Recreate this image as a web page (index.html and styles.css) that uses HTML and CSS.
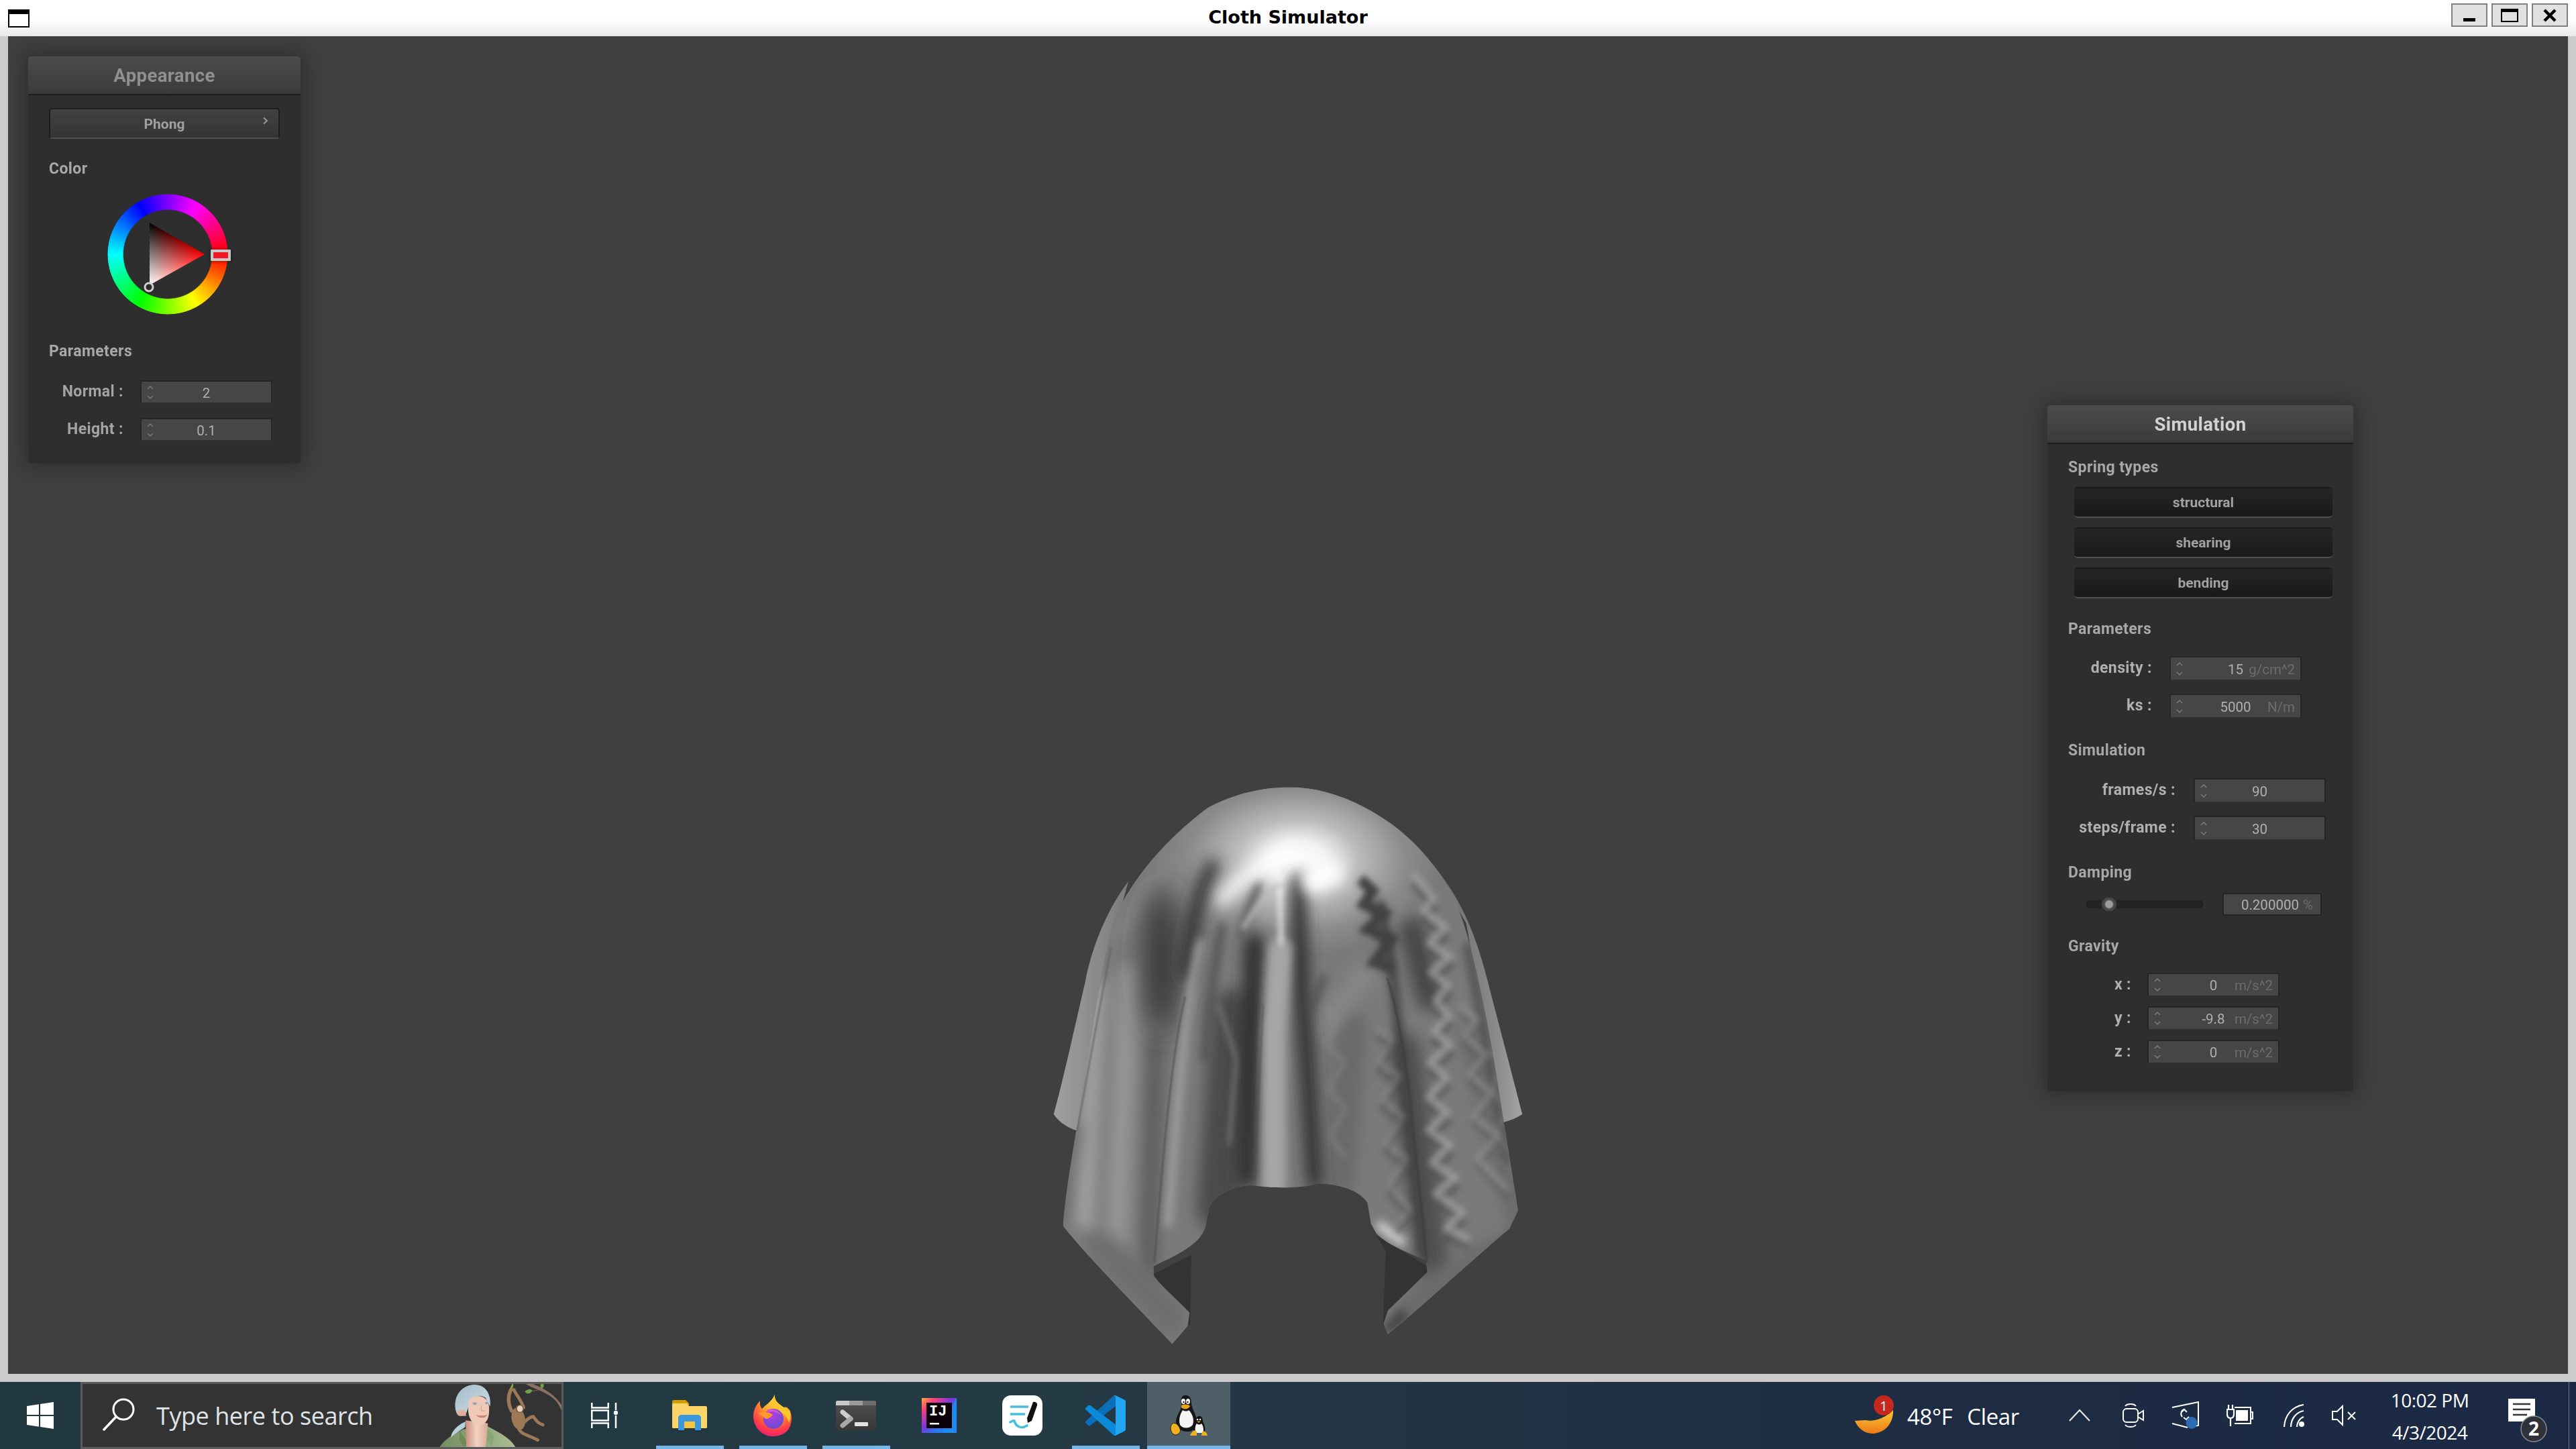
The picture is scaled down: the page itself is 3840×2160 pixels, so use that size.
FILE: index.html
```html
<!DOCTYPE html>
<html lang="en">
<head>
<meta charset="utf-8">
<title>Cloth Simulator</title>
<link rel="stylesheet" href="styles.css">
</head>
<body>
<div class="window">
  <header class="titlebar">
    <div class="win-icon"></div>
    <div class="win-title">Cloth Simulator</div>
    <div class="win-buttons">
      <button class="win-btn"><span class="glyph-min"></span></button>
      <button class="win-btn"><span class="glyph-max"></span></button>
      <button class="win-btn"><svg width="20" height="20" viewBox="0 0 20 20"><path d="M2 2 18 18M18 2 2 18" stroke="#000" stroke-width="4.5" fill="none"/></svg></button>
    </div>
  </header>
  <div class="frame">
    <main class="canvas">

      <svg class="cloth" viewBox="0 0 1568 1568" preserveAspectRatio="none">
        <defs>
          <clipPath id="front"><path d="M158 1215C165 1120 190 1000 215 850C240 700 270 520 300 420C340 330 430 220 560 130C640 90 720 76 790 76C880 76 980 110 1070 170C1150 225 1230 310 1265 410C1300 500 1340 680 1365 830C1385 950 1410 1090 1424 1175L1400 1222C1300 1300 1150 1430 1062 1496L1050 1470L1062 1435L1172 1335L1168 1305C1120 1285 1060 1265 1030 1235L1015 1210L1005 1155C985 1125 930 1105 865 1105C830 1118 740 1118 685 1110C640 1110 590 1125 565 1165L555 1215C540 1270 450 1300 410 1320L410 1345C430 1370 490 1420 510 1440L505 1475L462 1522C380 1440 240 1310 158 1215Z"/></clipPath>
          <filter id="b40" x="-80%" y="-80%" width="260%" height="260%"><feGaussianBlur stdDeviation="38"/></filter>
          <filter id="b20" x="-80%" y="-80%" width="260%" height="260%"><feGaussianBlur stdDeviation="20"/></filter>
          <filter id="b12" x="-80%" y="-80%" width="260%" height="260%"><feGaussianBlur stdDeviation="12"/></filter>
          <filter id="b8" x="-80%" y="-80%" width="260%" height="260%"><feGaussianBlur stdDeviation="8"/></filter>
          <filter id="b2" x="-80%" y="-80%" width="260%" height="260%"><feGaussianBlur stdDeviation="2"/></filter>
          <radialGradient id="dome" cx="810" cy="265" r="400" gradientUnits="userSpaceOnUse" gradientTransform="translate(810 265) scale(1 .62) translate(-810 -265)">
            <stop offset="0" stop-color="#fff"/><stop offset=".2" stop-color="#f2f2f2"/><stop offset=".42" stop-color="#bcbcbc"/><stop offset=".75" stop-color="#8c8c8c"/><stop offset="1" stop-color="#7a7a7a"/>
          </radialGradient>
          <linearGradient id="flapL" x1="0" y1="0" x2="1" y2="0"><stop offset="0" stop-color="#a0a0a0"/><stop offset="1" stop-color="#7a7a7a"/></linearGradient>
          <linearGradient id="flapR" x1="0" y1="0" x2="1" y2="0"><stop offset="0" stop-color="#6a6a6a"/><stop offset=".7" stop-color="#8a8a8a"/><stop offset="1" stop-color="#a4a4a4"/></linearGradient>
          <path id="zigA" d="M1130 300 1190 365 1160 395 1222 440 1178 480 1235 515 1182 555 1230 590 1195 630 1232 670 1190 710 1235 745 1180 790 1225 830 1175 880 1228 920 1175 965 1235 1005 1185 1050 1250 1090 1195 1130 1270 1180 1225 1220 1290 1250"/>
          <path id="zigB" d="M1260 640 1310 680 1275 720 1335 770 1290 820 1350 870 1300 930 1370 980 1310 1040 1395 1120"/>
          <path id="zigC" d="M1030 700 1075 730 1035 790 1095 825 1045 885 1105 930 1055 1000 1115 1040 1065 1110 1125 1170 1085 1210"/>
          <path id="zigD" d="M880 640 925 680 890 740 940 790 895 860 945 910 900 980 945 1040"/>
          <path id="zigE" d="M1345 760 1385 800 1350 860 1395 910 1365 970 1410 1040"/>
        </defs>
        <path d="M132 925C160 830 190 700 220 580C240 480 290 380 340 320L290 490L197 968C175 960 150 950 132 925Z" fill="url(#flapL)"/>
        <path d="M1436 925C1410 830 1370 690 1340 580C1310 470 1270 370 1190 280L1280 430L1380 947C1400 942 1420 935 1436 925Z" fill="url(#flapR)"/>
        <path d="M410 1340L515 1290L512 1475C480 1430 440 1380 410 1340Z" fill="#333"/>
        <path d="M1030 1240L1172 1320L1172 1345L1062 1435L1048 1480L1056 1280Z" fill="#333"/>
        <g clip-path="url(#front)">
          <rect width="1568" height="1568" fill="#7a7a7a"/>
          <rect x="100" y="30" width="1400" height="620" fill="url(#dome)"/>
          <g filter="url(#b20)" fill="none" stroke-linecap="round">
            <path d="M250 600 215 1240" stroke="#a0a0a0" stroke-width="55"/>
            <path d="M340 560 305 1280" stroke="#969696" stroke-width="60"/>
            <path d="M165 1200 205 960" stroke="#5c5c5c" stroke-width="22"/>
            <path d="M280 720 250 1240" stroke="#747474" stroke-width="18"/>
            <path d="M415 740 395 1340" stroke="#5c5c5c" stroke-width="46"/>
            <path d="M630 660 590 1170" stroke="#4c4c4c" stroke-width="120"/>
            <path d="M960 700 925 1100" stroke="#6a6a6a" stroke-width="90"/>
            <path d="M1110 760 1190 1320" stroke="#515151" stroke-width="90"/>
            <path d="M1290 720 1420 1180" stroke="#6b6b6b" stroke-width="60"/>
            <path d="M1130 450 1175 620" stroke="#474747" stroke-width="70"/>
            <path d="M1000 560 880 700" stroke="#868686" stroke-width="60"/>
            <path d="M320 460C360 380 400 320 440 280" stroke="#8a8a8a" stroke-width="30"/>
          </g>
          <ellipse cx="432" cy="530" rx="52" ry="190" fill="#383838" filter="url(#b40)"/>
          <g filter="url(#b20)" fill="none" stroke-linecap="round">
            <path d="M690 480 668 1090" stroke="#2e2e2e" stroke-width="56"/>
            <path d="M812 320 822 600 838 800 858 1100" stroke="#2e2e2e" stroke-width="44"/>
            <path d="M575 280C535 340 515 430 500 560" stroke="#2e2e2e" stroke-width="36"/>
          </g>
          <g filter="url(#b12)" fill="none" stroke-linecap="round">
            <path d="M600 440C575 550 565 650 555 780" stroke="#555" stroke-width="24"/>
            <path d="M700 330C680 380 665 420 655 460" stroke="#5a5a5a" stroke-width="24"/>
            <path d="M1040 380 1075 560" stroke="#3e3e3e" stroke-width="26"/>
            <path d="M1075 560 1160 1290" stroke="#404040" stroke-width="24"/>
            <path d="M1285 490 1325 690 1395 1040" stroke="#505050" stroke-width="24"/>
            <path d="M885 570 845 650" stroke="#505050" stroke-width="18"/>
            <path d="M762 500 745 720 745 1110" stroke="#a6a6a6" stroke-width="66"/>
            <path d="M540 480C500 620 480 860 450 1210" stroke="#a4a4a4" stroke-width="20"/>
            <path d="M1100 1255 1040 1215" stroke="#d4d4d4" stroke-width="24"/>
          </g>
          <g filter="url(#b20)" fill="none" stroke-linecap="round">
            <path d="M600 370C640 320 700 280 780 250" stroke="#fff" stroke-width="34"/>
            <path d="M910 300 850 320" stroke="#fff" stroke-width="60"/>
          </g>
          <g filter="url(#b8)" fill="none" stroke-linecap="round">
            <path d="M760 310 765 480" stroke="#fff" stroke-width="9"/>
            <path d="M660 440C700 380 720 360 760 330" stroke="#bcbcbc" stroke-width="12"/>
            <path d="M590 640 640 780 620 1000" stroke="#747474" stroke-width="10"/>
          </g>
          <g filter="url(#b8)" fill="none" stroke-linejoin="miter">
            <path d="M985 315 1020 345 995 380 1050 405 1005 445 1072 470 1025 530 1075 545" stroke="#424242" stroke-width="30"/>
            <use href="#zigA" y="24" stroke="#505050" stroke-width="20" opacity=".6"/>
            <use href="#zigA" stroke="#a8a8a8" stroke-width="16" opacity=".7"/>
            <use href="#zigB" y="20" stroke="#555" stroke-width="14" opacity=".45"/>
            <use href="#zigB" stroke="#9a9a9a" stroke-width="12" opacity=".55"/>
            <use href="#zigC" y="22" stroke="#3c3c3c" stroke-width="14" opacity=".4"/>
            <use href="#zigC" stroke="#989898" stroke-width="10" opacity=".45"/>
            <use href="#zigD" stroke="#8c8c8c" stroke-width="14" opacity=".4"/>
            <use href="#zigE" stroke="#959595" stroke-width="10" opacity=".45"/>
          </g>
          <path d="M1062 1440 1170 1340 1400 1222 1424 1175 1450 1250 1100 1530Z" fill="#6a6a6a" filter="url(#b20)"/>
          <path d="M155 1215 462 1522 510 1440 420 1350 300 1240Z" fill="#6e6e6e" filter="url(#b20)"/>
          <path d="M1056 1490 1110 1440" stroke="#444" stroke-width="30" fill="none" filter="url(#b12)"/>
          <g filter="url(#b2)" fill="none">
            <path d="M1060 570C1085 640 1112 780 1125 900C1140 1040 1160 1200 1170 1310" stroke="#3e3e3e" stroke-width="4"/>
            <path d="M292 490C262 640 225 820 197 968" stroke="#5e5e5e" stroke-width="3"/>
            <path d="M498 620C460 760 435 1050 412 1310" stroke="#4c4c4c" stroke-width="3"/>
            <path d="M715 640 690 1110M840 660 865 1105" stroke="#4e4e4e" stroke-width="2"/>
          </g>
        </g>
      </svg>

      <section class="panel panel-appearance">
        <h2 class="panel-head dim">Appearance</h2>
        <div class="btn-combo"><span>Phong</span><svg class="combo-arrow" width="10" height="12" viewBox="0 0 10 12"><path d="M2 1.500 7 6 2 10.500" fill="none" stroke="#9a9a9a" stroke-width="2"/></svg></div>
        <div class="group-label label-color">Color</div>
        <div class="wheel-box">
          <div class="wheel"></div>
          <svg class="wheel-over" width="180" height="180" viewBox="0 0 180 180">
            <defs>
              <linearGradient id="triR" gradientUnits="userSpaceOnUse" x1="63" y1="90" x2="145" y2="90"><stop offset="0" stop-color="#000"/><stop offset="1" stop-color="#f00"/></linearGradient>
              <linearGradient id="triW" gradientUnits="userSpaceOnUse" x1="103" y1="66" x2="63" y2="136"><stop offset="0" stop-color="#000"/><stop offset="1" stop-color="#fff"/></linearGradient>
            </defs>
            <polygon points="63,43 145,90 63,136" fill="url(#triR)"/>
            <polygon class="plus" points="63,43 145,90 63,136" fill="url(#triW)"/>
            <circle cx="62" cy="139" r="6" fill="#2b2b2b" stroke="#cfcfcf" stroke-width="3"/>
          </svg>
          <div class="hue-handle"></div>
        </div>
        <div class="group-label label-params">Parameters</div>
        <div class="row row-normal">
          <label class="row-label dim2">Normal :</label>
          <div class="num"><svg class="spin" width="14" height="24" viewBox="0 0 14 24"><path d="M3 7 7 3 11 7M3 17 7 21 11 17" fill="none" stroke="#7c7c7c" stroke-width="1.500"/></svg><span class="val">2</span></div>
        </div>
        <div class="row row-normal row-next">
          <label class="row-label dim2">Height :</label>
          <div class="num"><svg class="spin" width="14" height="24" viewBox="0 0 14 24"><path d="M3 7 7 3 11 7M3 17 7 21 11 17" fill="none" stroke="#7c7c7c" stroke-width="1.500"/></svg><span class="val">0.1</span></div>
        </div>
      </section>

      <section class="panel panel-sim">
        <h2 class="panel-head">Simulation</h2>
        <div class="group-label first">Spring types</div>
        <div class="springs">
          <div class="btn-on">structural</div>
          <div class="btn-on">shearing</div>
          <div class="btn-on">bending</div>
        </div>
        <div class="group-label g-param">Parameters</div>
        <div class="row row-density tall m26">
          <label class="row-label">density :</label>
          <div class="num"><svg class="spin" width="14" height="24" viewBox="0 0 14 24"><path d="M3 7 7 3 11 7M3 17 7 21 11 17" fill="none" stroke="#7c7c7c" stroke-width="1.500"/></svg><span class="val">15</span><span class="unit">g/cm^2</span></div>
        </div>
        <div class="row row-density tall m19">
          <label class="row-label">ks :</label>
          <div class="num"><svg class="spin" width="14" height="24" viewBox="0 0 14 24"><path d="M3 7 7 3 11 7M3 17 7 21 11 17" fill="none" stroke="#7c7c7c" stroke-width="1.500"/></svg><span class="val">5000</span><span class="unit">N/m</span></div>
        </div>
        <div class="group-label g-sim">Simulation</div>
        <div class="row row-frames tall m27">
          <label class="row-label">frames/s :</label>
          <div class="num"><svg class="spin" width="14" height="24" viewBox="0 0 14 24"><path d="M3 7 7 3 11 7M3 17 7 21 11 17" fill="none" stroke="#7c7c7c" stroke-width="1.500"/></svg><span class="val">90</span></div>
        </div>
        <div class="row row-frames tall m19">
          <label class="row-label">steps/frame :</label>
          <div class="num"><svg class="spin" width="14" height="24" viewBox="0 0 14 24"><path d="M3 7 7 3 11 7M3 17 7 21 11 17" fill="none" stroke="#7c7c7c" stroke-width="1.500"/></svg><span class="val">30</span></div>
        </div>
        <div class="group-label g-damp">Damping</div>
        <div class="slider-row">
          <div class="track"><div class="thumb"></div></div>
          <div class="float-box"><span class="val">0.200000</span><span class="unit">%</span></div>
        </div>
        <div class="group-label g-grav">Gravity</div>
        <div class="row row-grav grav m25">
          <label class="row-label">x :</label>
          <div class="num"><svg class="spin" width="14" height="24" viewBox="0 0 14 24"><path d="M3 7 7 3 11 7M3 17 7 21 11 17" fill="none" stroke="#7c7c7c" stroke-width="1.500"/></svg><span class="val">0</span><span class="unit">m/s^2</span></div>
        </div>
        <div class="row row-grav grav m14">
          <label class="row-label">y :</label>
          <div class="num"><svg class="spin" width="14" height="24" viewBox="0 0 14 24"><path d="M3 7 7 3 11 7M3 17 7 21 11 17" fill="none" stroke="#7c7c7c" stroke-width="1.500"/></svg><span class="val">-9.8</span><span class="unit">m/s^2</span></div>
        </div>
        <div class="row row-grav grav m14">
          <label class="row-label">z :</label>
          <div class="num"><svg class="spin" width="14" height="24" viewBox="0 0 14 24"><path d="M3 7 7 3 11 7M3 17 7 21 11 17" fill="none" stroke="#7c7c7c" stroke-width="1.500"/></svg><span class="val">0</span><span class="unit">m/s^2</span></div>
        </div>
      </section>
    </main>
  </div>
</div>

<footer class="taskbar">
  <div class="start">
    <svg width="40" height="40" viewBox="0 0 40 40"><path fill="#fff" d="M0 6 18 3.300V19H0ZM20 3 40 0V19H20ZM0 21H18V36.700L0 34ZM20 21H40V40L20 37Z"/></svg>
  </div>
  <div class="search">
    <svg class="search-icon" width="50" height="50" viewBox="0 0 50 50"><circle cx="31" cy="17" r="15" fill="none" stroke="#fff" stroke-width="3"/><path d="M20 28 2 47" stroke="#fff" stroke-width="3.500" stroke-linecap="round" fill="none"/></svg>
    <span class="search-text">Type here to search</span>
    <svg class="search-art" width="210" height="94" viewBox="-9 69 630 282">
      <defs>
        <linearGradient id="shirt" x1="0" y1="0" x2="1" y2="0"><stop offset="0" stop-color="#748c62"/><stop offset="1" stop-color="#abbf92"/></linearGradient>
        <linearGradient id="skin" x1="0" y1="0" x2="1" y2="0"><stop offset="0" stop-color="#c98f7c"/><stop offset=".5" stop-color="#f3d3c3"/><stop offset="1" stop-color="#d9a995"/></linearGradient>
        <linearGradient id="hair" x1="0" y1="0" x2="1" y2="1"><stop offset="0" stop-color="#a4bcc8"/><stop offset="1" stop-color="#cfdfe8"/></linearGradient>
      </defs>
      <path d="M450 60C480 90 560 100 600 150C615 170 625 195 630 215L630 180C600 120 550 90 470 60Z" fill="#8a6f63"/>
      <path d="M478 103C500 100 515 98 528 90" stroke="#8a6f63" stroke-width="3" fill="none"/>
      <path d="M457 103C470 92 482 90 490 98C484 112 468 120 457 103Z" fill="#6da143"/>
      <path d="M534 62C545 72 545 82 534 90C524 82 524 72 534 62Z" fill="#6da143"/>
      <path d="M405 60C408 72 404 90 396 100L390 90C396 78 400 68 405 60Z" fill="#7aa749"/>
      <path d="M72 360C90 320 130 300 180 272L290 258C340 285 395 310 420 360Z" fill="url(#shirt)"/>
      <path d="M165 275 205 340 180 350 165 320Z" fill="#6d8a57"/>
      <path d="M285 262 320 300 310 345 280 320Z" fill="#8ba577"/>
      <path d="M126 308C130 275 165 248 192 238L190 262C165 280 140 295 130 306Z" fill="#b9cfda"/>
      <path d="M192 232 196 360H282L292 245Z" fill="url(#skin)"/>
      <path d="M150 195C132 130 170 76 228 72C282 70 308 115 302 170L280 130C250 112 218 128 212 150L195 200C175 220 155 210 150 195Z" fill="url(#hair)"/>
      <path d="M208 140C240 108 292 122 297 170C300 220 288 250 250 256C220 250 192 210 208 140Z" fill="#efc9b8"/>
      <path d="M162 185C150 190 150 208 165 212L195 212 190 185Z" fill="#dfae9c"/>
      <path d="M220 156C228 150 240 152 246 158M278 156C284 150 292 150 296 154" stroke="#c49a8a" stroke-width="3" fill="none"/>
      <ellipse cx="233" cy="158" rx="8" ry="4" fill="#6ea3cf"/><ellipse cx="286" cy="155" rx="6" ry="4" fill="#6ea3cf"/>
      <path d="M262 165 262 188 280 190" stroke="#d8a796" stroke-width="4" fill="none"/>
      <path d="M238 208C255 212 275 212 288 207C282 224 254 226 238 208Z" fill="#d07f6f"/>
      <g fill="none" stroke="#9c7a57" stroke-linecap="round">
        <path d="M395 95C382 120 378 150 398 190" stroke-width="16"/>
        <path d="M408 95C420 120 440 140 452 175" stroke-width="14"/>
        <path d="M440 255C465 230 480 215 495 215C510 235 515 245 538 252" stroke-width="14"/>
        <path d="M430 270C440 295 480 300 515 320" stroke-width="14"/>
      </g>
      <ellipse cx="428" cy="225" rx="30" ry="50" fill="#9c7a57" transform="rotate(-12 428 225)"/>
      <circle cx="434" cy="180" r="18" fill="#7a5f45"/>
      <ellipse cx="435" cy="180" rx="13" ry="14" fill="#e7d4c2"/>
    </svg>
  </div>
  <div class="taskview">
    <svg width="40" height="40" viewBox="0 0 40 40"><path d="M1.250 1V8.500H25.750V1M1.250 39V31.500H25.750V39M1.250 12.500H25.750V27.500H1.250Z" fill="none" stroke="#fff" stroke-width="2.500"/><path d="M37 1V12M37 20V39" stroke="#fff" stroke-width="2.500"/><circle cx="37" cy="16" r="3.200" fill="#fff"/></svg>
  </div>
  <nav class="apps">
    <div class="app on">
      <svg width="52" height="46" viewBox="0 0 52 46"><path d="M0 3C0 1 1 0 3 0H20L25 5V8H0Z" fill="#d99a00"/><path d="M0 8C0 7 0 5 2 5H22L25 9H50C51 9 52 10 52 11V40C52 42 51 42 50 42H2C1 42 0 42 0 40Z" fill="#fdd567"/><path d="M9 45V27C9 24 11 22 14 22H38C41 22 43 24 43 27V45H34V32H18V45Z" fill="#3b98de"/><path d="M18 32H34V42H18Z" fill="#f4c542"/></svg>
    </div>
    <div class="app on">
      <svg width="60" height="62" viewBox="0 0 60 62">
        <defs>
          <radialGradient id="ffA" cx=".6" cy=".15" r=".95"><stop offset="0" stop-color="#ffe04b"/><stop offset=".4" stop-color="#ff9a2a"/><stop offset=".75" stop-color="#ff3a4a"/><stop offset="1" stop-color="#e11585"/></radialGradient>
          <radialGradient id="ffB" cx=".4" cy=".3" r=".8"><stop offset="0" stop-color="#b83de0"/><stop offset="1" stop-color="#5a4fd0"/></radialGradient>
        </defs>
        <path d="M33 0C32 10 38 14 45 20C52 15 54 24 55 22C62 38 57 62 30 62C10 62 -3 42 2 24C3 20 6 14 11 9C10 15 12 19 14 21C18 16 27 12 33 0Z" fill="url(#ffA)"/>
        <path d="M33 0C29 10 27 17 30 22C42 22 52 32 54 42C60 30 55 20 48 20C40 14 32 10 33 0Z" fill="#ffc52f"/>
        <circle cx="31" cy="36" r="15" fill="url(#ffB)"/>
        <path d="M9 28C16 25 24 25 30 30C26 34 24 36 19 36C16 33 13 30 9 28Z" fill="#ff9a2a"/>
        <path d="M22 22C30 20 40 24 43 32C38 26 30 24 22 26Z" fill="#d65ad0"/>
      </svg>
    </div>
    <div class="app on">
      <svg width="60" height="44" viewBox="0 0 60 44">
        <defs><linearGradient id="termB" x1="0" y1="0" x2="0" y2="1"><stop offset="0" stop-color="#4b4b4b"/><stop offset="1" stop-color="#383838"/></linearGradient></defs>
        <path d="M0 7H60V41C60 43 59 44 57 44H3C1 44 0 43 0 41Z" fill="url(#termB)"/>
        <path d="M0 7V2C0 1 1 0 2 0H20V7Z" fill="#c9c9c9"/><rect x="20" width="20" height="7" fill="#9b9b9b"/><path d="M40 0H58C59 0 60 1 60 2V7H40Z" fill="#6c6c6c"/>
        <path d="M10 17 22 27" stroke="#cfcfcf" stroke-width="7" stroke-linecap="round"/><path d="M22 27 10 37" stroke="#a8a8a8" stroke-width="7" stroke-linecap="round"/>
        <rect x="28" y="32" width="20" height="6" rx="1" fill="#e2e2e2"/>
      </svg>
    </div>
    <div class="app">
      <svg width="52" height="52" viewBox="0 0 52 52">
        <defs><linearGradient id="ijG" x1="0" y1="0" x2="1" y2="1"><stop offset="0" stop-color="#ffb02e"/><stop offset=".2" stop-color="#fc3c7e"/><stop offset=".45" stop-color="#7a36e0"/><stop offset=".7" stop-color="#1f7ff0"/><stop offset="1" stop-color="#6b57ff"/></linearGradient></defs>
        <rect width="52" height="52" fill="url(#ijG)"/>
        <path d="M52 0V52H30L50 2Z" fill="#1693ee" opacity=".8"/>
        <rect x="7" y="7" width="38" height="38" fill="#0b0008"/>
        <text class="ij-text" x="11" y="26">IJ</text>
        <rect x="12" y="37" width="14" height="2.500" fill="#fff"/>
      </svg>
    </div>
    <div class="app">
      <svg width="60" height="60" viewBox="0 0 60 60">
        <rect width="60" height="60" rx="13" fill="#fff"/>
        <path d="M12 17H39M12 28H34" stroke="#45bfdd" stroke-width="3.500" fill="none"/>
        <path d="M12 40C16 38 17 37 18 38C20 46 28 51 37 45" stroke="#45bfdd" stroke-width="3.500" fill="none" stroke-linecap="round"/>
        <path d="M46 10C49 9 53 11 52 15L44 38L38 41L37 34Z" fill="#111"/>
      </svg>
    </div>
    <div class="app on">
      <svg width="60" height="60" viewBox="0 0 100 100">
        <path fill="#0a6fb8" d="M96.461 10.796L75.857.876a6.23 6.23 0 0 0-7.107 1.207l-67.45 61.5a4.167 4.167 0 0 0 .004 6.162l5.51 5.009a4.167 4.167 0 0 0 5.32.236l81.228-61.62c2.725-2.067 6.639-.124 6.639 3.297v-.24a6.25 6.25 0 0 0-3.54-5.63z"/>
        <path fill="#0a8ad8" d="M96.461 89.204l-20.604 9.92a6.23 6.23 0 0 1-7.107-1.207l-67.45-61.5a4.167 4.167 0 0 1 .004-6.162l5.51-5.009a4.167 4.167 0 0 1 5.32-.236l81.228 61.62c2.725 2.067 6.639.124 6.639-3.297v.24a6.25 6.25 0 0 1-3.54 5.63z"/>
        <path fill="#22a6f2" d="M75.857 99.126a6.23 6.23 0 0 1-7.107-1.207c2.306 2.306 6.25.672 6.25-2.589V4.67c0-3.262-3.944-4.895-6.25-2.589a6.23 6.23 0 0 1 7.107-1.207l20.6 9.907A6.25 6.25 0 0 1 100 16.413v67.174a6.25 6.25 0 0 1-3.543 5.63z"/>
      </svg>
    </div>
    <div class="app on active">
      <svg width="56" height="60" viewBox="0 0 56 60">
        <path d="M21 0C29 -1 32 4 32 12C33 22 40 28 40 40C40 48 35 54 26 54C14 54 9 46 9 38C10 28 18 22 17 12C16 6 17 2 21 0Z" fill="#16161a"/>
        <path d="M19 22C14 30 13 38 15 44C19 50 29 50 34 44C37 34 32 26 28 22C26 24 22 24 19 22Z" fill="#f4f4f4"/>
        <ellipse cx="20" cy="9" rx="3" ry="4" fill="#fff"/><ellipse cx="27" cy="9" rx="3" ry="4" fill="#fff"/>
        <circle cx="20.500" cy="10" r="1.200" fill="#111"/><circle cx="26.500" cy="10" r="1.200" fill="#111"/>
        <path d="M17 15C21 13 27 13 30 16C28 21 20 22 17 18Z" fill="#e9a511"/>
        <path d="M4 42C8 40 13 44 15 50C17 55 13 58 9 59C5 59 2 56 1 50C1 46 2 44 4 42Z" fill="#f2b01e" stroke="#2a2418" stroke-width="1"/>
        <path d="M43 31C47 30 49 34 49 39C52 44 53 50 52 55L36 55C34 50 35 44 38 39C38 35 39 32 43 31Z" fill="#111114"/>
        <path d="M40 42C37 46 37 52 39 56H49C51 52 50 46 47 42C45 44 42 44 40 42Z" fill="#f4f4f4"/>
        <circle cx="41" cy="36" r="1.300" fill="#fff"/><circle cx="45" cy="36" r="1.300" fill="#fff"/>
        <path d="M40 38.500H46L43 41Z" fill="#e9a511"/>
        <path d="M34 54C36 51 39 52 40 55L40 60H30C30 58 32 56 34 54ZM48 55C50 52 53 54 55 57L56 60H47Z" fill="#f2b01e"/>
      </svg>
    </div>
  </nav>
  <div class="tray">
    <div class="weather">
      <svg class="moon" width="60" height="60" viewBox="0 0 60 60">
        <defs><linearGradient id="moonG" x1="0" y1="0" x2="0" y2="1"><stop offset="0" stop-color="#f8c834"/><stop offset="1" stop-color="#ec7b16"/></linearGradient></defs>
        <path d="M0 38C4 48 14 57 26 57C46 57 58 40 57 22C48 32 30 40 16 37Z" fill="url(#moonG)"/>
        <circle cx="43" cy="15" r="15" fill="#c5281c"/>
        <text class="moon-num" x="43" y="23">1</text>
      </svg>
      <span class="weather-text">48°F</span><span class="weather-text clear">Clear</span>
    </div>
    <div class="tray-cell">
      <svg width="34" height="20" viewBox="0 0 34 20"><path d="M2 18 17 2 32 18" fill="none" stroke="#e8e8e8" stroke-width="2.200"/></svg>
    </div>
    <div class="tray-cell">
      <svg width="34" height="38" viewBox="0 0 34 38"><path d="M6 5C9 1 19 1 22 5M6 33C9 37 19 37 22 33" fill="none" stroke="#fff" stroke-width="2"/><rect x="3" y="9" width="22" height="20" rx="5" fill="none" stroke="#fff" stroke-width="2"/><path d="M25 17 33 12V26L25 21" fill="none" stroke="#fff" stroke-width="2"/></svg>
    </div>
    <div class="tray-cell">
      <svg width="44" height="42" viewBox="0 0 44 42"><path d="M2 9 41 1V36L34 37M25 39 2 33Z" fill="none" stroke="#fff" stroke-width="2"/><path d="M16 16 20 12 24 16M20 12C15 13 14 20 17 23M27 23 23 27 19 24M23 27" fill="none" stroke="#fff" stroke-width="2"/><ellipse cx="31" cy="32" rx="8.500" ry="9" fill="#2a6db5"/></svg>
    </div>
    <div class="tray-cell shift-a">
      <svg width="40" height="36" viewBox="0 0 40 36"><path d="M3 2V9M9 2V9M1 9H11V16C11 20 9 22 6 22C3 22 1 20 1 16ZM6 22V34" fill="none" stroke="#fff" stroke-width="2.200"/><path d="M12 6H36V30H12M36 13H39V23H36" fill="none" stroke="#fff" stroke-width="2"/><rect x="14" y="10" width="18" height="16" fill="#fff"/></svg>
    </div>
    <div class="tray-cell shift-b">
      <svg width="34" height="34" viewBox="0 0 34 34"><path d="M2 34C3 16 14 4 31 1M12 34C12 22 20 12 31 10M21 34C21 28 25 21 31 19" fill="none" stroke="#fff" stroke-width="2.200"/><circle cx="28" cy="30" r="4" fill="#fff"/></svg>
    </div>
    <div class="tray-cell">
      <svg width="40" height="32" viewBox="0 0 40 32"><path d="M2 10H9L17 2V30L9 22H2Z" fill="none" stroke="#fff" stroke-width="2"/><path d="M25 11 36 22M36 11 25 22" fill="none" stroke="#fff" stroke-width="2"/></svg>
    </div>
    <div class="clock"><span>10:02 PM</span><span>4/3/2024</span></div>
    <div class="notif">
      <svg width="70" height="66" viewBox="0 0 70 66">
        <path d="M12 0H52V34H12Z" fill="#fff"/>
        <path d="M19 8H45M19 16H45M19 24H40" stroke="#333" stroke-width="2.500"/>
        <circle cx="50" cy="45" r="19" fill="#2f3238" stroke="#8a8a8a" stroke-width="1.500"/>
        <text class="notif-num" x="50" y="55">2</text>
      </svg>
    </div>
    <div class="desk-peek"></div>
  </div>
</footer>
</body>
</html>
```
FILE: styles.css
```css
* { box-sizing: border-box; }
html, body { margin: 0; padding: 0; }
body { width: 3840px; height: 2160px; overflow: hidden; display: flex; flex-direction: column; background: #1f2f3d; font-family: Roboto, "Liberation Sans", sans-serif; }

.window { height: 2060px; display: flex; flex-direction: column; background: #cbcbcb; }
.titlebar { height: 54px; flex: none; display: flex; align-items: center; justify-content: space-between; position: relative; background: linear-gradient(#fff 0, #fff 55%, #e9e9e9 100%); padding: 0 12px; }
.win-icon { width: 32px; height: 27px; border: 2px solid #000; border-top-width: 7px; background: #fff; flex: none; }
.win-title { position: absolute; left: 0; right: 0; top: 9px; text-align: center; font: bold 27px/34px "DejaVu Sans", sans-serif; color: #000; }
.win-buttons { display: flex; gap: 6px; margin-top: -9px; flex: none; }
.win-btn { width: 54px; height: 35px; padding: 0; border: 2px solid #808080; background: #e1e1e1; display: flex; align-items: center; justify-content: center; }
.glyph-min { width: 18px; height: 5px; background: #000; margin-top: 14px; }
.glyph-max { width: 26px; height: 20px; border: 2px solid #000; border-top-width: 5px; }

.frame { flex: 1; padding: 0 12px 12px; display: flex; }
.canvas { flex: 1; position: relative; background: #404040; overflow: hidden; }
.cloth { position: absolute; left: 1488px; top: 1076px; width: 840px; height: 900px; }

.panel { position: absolute; background: #2e2e2e; border-radius: 4px; box-shadow: 0 0 32px 8px rgba(0,0,0,.26); filter: blur(.7px); color: #b4b4b4; }
.panel-appearance { left: 30px; top: 30px; width: 406px; height: 607px; }
.panel-sim { left: 3040px; top: 550px; width: 456px; height: 1023px; }
.panel-head { margin: 0; height: 58px; display: flex; align-items: center; justify-content: center; font-size: 27.500px; letter-spacing: .4px; font-weight: 700; color: #d2d2d2; background: linear-gradient(#4c4c4c, #3a3a3a); border-bottom: 2px solid #1c1c1c; border-radius: 4px 4px 0 0; }
.panel-head.dim { color: #8f8f8f; }

.btn-combo { position: relative; margin: 19px 0 0 31px; width: 344px; height: 46px; display: flex; align-items: center; justify-content: center; font-size: 21px; font-weight: 700; color: #a0a0a0; background: linear-gradient(#424242, #343434); border: 2px solid #1e1e1e; border-bottom-color: #4e4e4e; border-radius: 4px; }
.btn-combo span { margin-top: 2px; }
.combo-arrow { position: absolute; right: 14px; top: 11px; }

.group-label { margin-left: 31px; height: 30px; line-height: 32px; font-size: 23px; letter-spacing: .4px; font-weight: 700; color: #a8a8a8; }
.label-color { margin-top: 29px; }
.wheel-box { position: relative; margin: 23px 0 0 118px; width: 180px; height: 180px; }
.wheel { width: 180px; height: 180px; border-radius: 50%; background: conic-gradient(from 90deg, #f00, #ff0, #0f0, #0ff, #00f, #f0f, #f00); -webkit-mask: radial-gradient(circle, transparent 65.500px, #000 67px, #000 89px, transparent 90px); mask: radial-gradient(circle, transparent 65.500px, #000 67px, #000 89px, transparent 90px); }
.wheel-over { position: absolute; left: 0; top: 0; overflow: visible; }
.plus { mix-blend-mode: plus-lighter; }
.hue-handle { position: absolute; left: 154px; top: 83px; width: 30px; height: 17px; background: #f01a24; border: 4px solid #c8c8c8; border-radius: 1px; box-shadow: 0 0 5px rgba(0,0,0,.6); }
.label-params { margin-top: 39px; }

.row { display: flex; align-items: center; height: 35px; margin-top: 29px; }
.row-next { margin-top: 21px; }
.row.tall { height: 37px; }
.row.grav { height: 36px; }
.m14 { margin-top: 14px; }
.m19 { margin-top: 19px; }
.m25 { margin-top: 25px; }
.m26 { margin-top: 26px; }
.m27 { margin-top: 27px; }
.row-label { text-align: right; font-size: 23px; letter-spacing: .4px; font-weight: 700; color: #b0b0b0; flex: none; margin-top: -2px; }
.row-label.dim2 { color: #a4a4a4; }
.row-normal .row-label { width: 142px; margin-right: 25px; }
.row-density .row-label { width: 156px; margin-right: 26px; }
.row-frames .row-label { width: 191px; margin-right: 27px; }
.row-grav .row-label { width: 125px; margin-right: 24px; }
.num { width: 197px; height: 100%; display: grid; grid-template-columns: 1fr auto 1fr; align-items: center; background: #464646; border: 2px solid #252525; border-bottom-color: #303030; border-radius: 3px; font-size: 20.500px; color: #b0b0b0; padding: 0 8px; }
.spin { justify-self: start; margin-left: -2px; }
.val { font-weight: 400; margin-top: 2px; }
.unit { justify-self: end; color: #6c6c6c; margin-top: 2px; white-space: nowrap; }

.springs { margin: 15px 0 0 40px; width: 385px; display: flex; flex-direction: column; gap: 14px; }
.btn-on { height: 46px; display: flex; align-items: center; justify-content: center; font-size: 21px; font-weight: 700; color: #a2a2a2; background: linear-gradient(#262626, #191919); border-top: 2px solid #1a1a1a; border-bottom: 2px solid #505050; border-radius: 5px; }
.first { margin-top: 19px; }
.g-param { margin-top: 30px; }
.g-sim { margin-top: 32px; }
.g-damp { margin-top: 32px; }
.g-grav { margin-top: 30px; }

.slider-row { display: flex; align-items: center; height: 34px; margin-top: 16px; padding-left: 58px; }
.track { position: relative; width: 174px; height: 12px; background: #242424; border-radius: 6px; box-shadow: inset 0 0 3px #161616; }
.thumb { position: absolute; left: 22px; top: -6px; width: 24px; height: 24px; border-radius: 50%; background: radial-gradient(circle, #9c9c9c 0, #9c9c9c 5px, #4c4c4c 7px, #454545 10px, #222 12px); }
.float-box { margin-left: 29px; width: 148px; height: 100%; display: flex; align-items: center; justify-content: flex-end; gap: 6px; padding-right: 11px; background: #464646; border: 2px solid #252525; border-radius: 3px; font-size: 20.500px; color: #b0b0b0; }

.taskbar { height: 100px; flex: none; display: flex; background: linear-gradient(90deg, #22383f 0, #243a44 40%, #1d2c42 75%, #1b2945 100%); color: #fff; }
.start { width: 120px; flex: none; display: flex; align-items: center; justify-content: center; }
.search { width: 720px; flex: none; display: flex; align-items: center; background: #333; border: 3px solid #5b5b5b; position: relative; overflow: hidden; }
.search-icon { margin-left: 30px; margin-top: -3px; flex: none; }
.search-text { margin-left: 30px; font: 36px "Open Sans", sans-serif; color: #dfe4e8; margin-top: 1px; white-space: nowrap; letter-spacing: -.45px; }
.search-art { position: absolute; right: 0; bottom: 0; }
.taskview { width: 126px; flex: none; display: flex; align-items: center; justify-content: center; padding-right: 5px; }
.apps { display: flex; flex: none; }
.app { width: 124px; height: 100px; display: flex; align-items: center; justify-content: center; position: relative; }
.app.on::after { content: ""; position: absolute; left: 12px; right: 11px; bottom: 0; height: 5px; background: #76b5e8; }
.app.active { background: #4e5f68; }
.app.active::after { left: 0; right: 0; }
.ij-text { font: bold 22px "Liberation Mono", monospace; fill: #fff; }

.tray { margin-left: auto; display: flex; align-items: center; flex: none; }
.weather { width: 295px; flex: none; display: flex; align-items: center; height: 100%; }
.moon { margin-right: 18px; flex: none; }
.moon-num { font: 20px "Open Sans", sans-serif; fill: #fff; text-anchor: middle; }
.weather-text { font: 33px "Open Sans", sans-serif; color: #fff; letter-spacing: -.4px; margin-top: 2px; }
.clear { margin-left: 22px; }
.tray-cell { width: 79px; flex: none; display: flex; align-items: center; justify-content: center; }
.shift-a { padding-left: 4px; }
.shift-b { padding-left: 8px; }
.clock { width: 176px; flex: none; display: flex; flex-direction: column; align-items: center; gap: 14px; font: 28px "Open Sans", sans-serif; letter-spacing: -.5px; color: #fff; line-height: 34px; padding-top: 2px; }
.notif { width: 100px; flex: none; display: flex; align-items: center; justify-content: center; padding-top: 16px; padding-left: 4px; }
.notif-num { font: bold 28px "Open Sans", sans-serif; fill: #fff; text-anchor: middle; }
.desk-peek { width: 30px; height: 100%; flex: none; background: linear-gradient(90deg, transparent 19px, #6a7686 19px, #6a7686 20px, transparent 20px); }
```
